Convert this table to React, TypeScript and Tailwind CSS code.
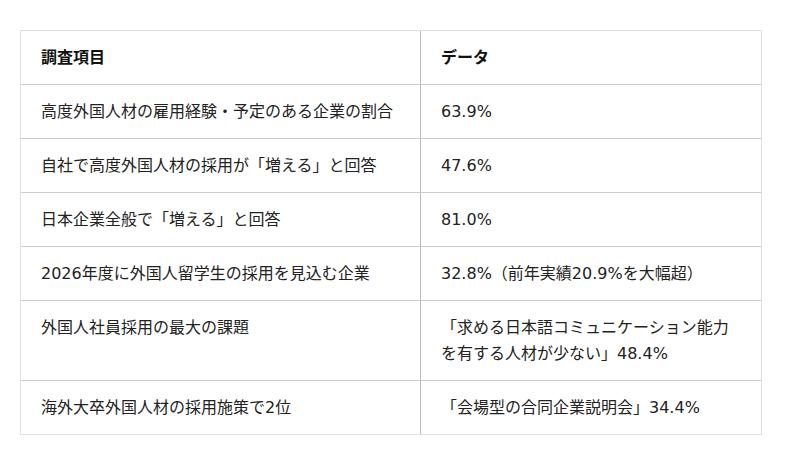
const rows: [string, string][] = [
  ["高度外国人材の雇用経験・予定のある企業の割合", "63.9%"],
  ["自社で高度外国人材の採用が「増える」と回答", "47.6%"],
  ["日本企業全般で「増える」と回答", "81.0%"],
  ["2026年度に外国人留学生の採用を見込む企業", "32.8%（前年実績20.9%を大幅超）"],
  ["外国人社員採用の最大の課題", "「求める日本語コミュニケーション能力を有する人材が少ない」48.4%"],
  ["海外大卒外国人材の採用施策で2位", "「会場型の合同企業説明会」34.4%"],
];

export default function App() {
  return (
    <div
      className="w-[800px] h-[464px] bg-white pl-[20px] pt-[30px] text-[#222]"
      style={{ fontFamily: '"DejaVu Sans", "Noto Sans CJK JP", sans-serif' }}
    >
      <div className="w-[742px] border border-[#e0e0e0] text-[16px] leading-[26px]">
        <div className="flex font-bold text-[#111]">
          <div className="w-[400px] border-r border-[#bbb] px-5 py-[13.5px]">調査項目</div>
          <div className="flex-1 px-5 py-[13.5px]">データ</div>
        </div>
        {rows.map(([item, data]) => (
          <div key={item} className="flex border-t border-[#ccc]">
            <div className="w-[400px] border-r border-[#bbb] px-5 py-[13.5px]">{item}</div>
            <div className="flex-1 px-5 py-[13.5px]">{data}</div>
          </div>
        ))}
      </div>
    </div>
  );
}
